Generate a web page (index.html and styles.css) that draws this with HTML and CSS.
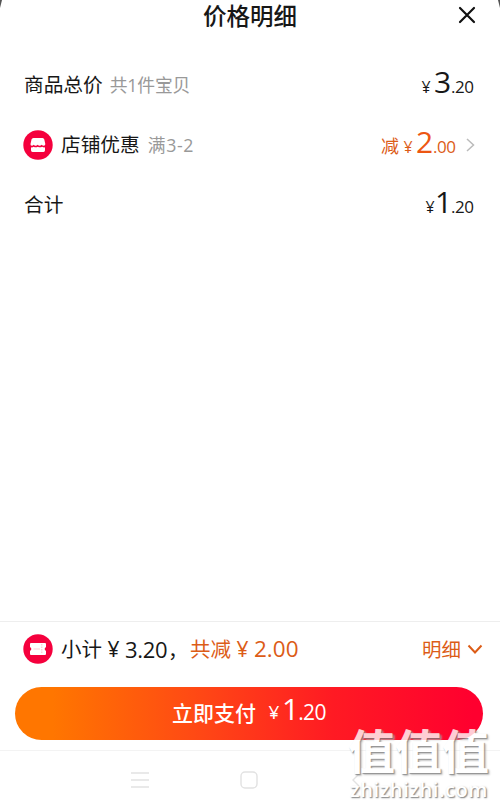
FILE: index.html
```html
<!DOCTYPE html>
<html lang="zh-CN">
<head>
<meta charset="utf-8">
<title>价格明细</title>
<link rel="stylesheet" href="styles.css">
</head>
<body>
<main class="sheet">
  <header class="header">
    <h1 class="title">价格明细</h1>
    <svg class="close" viewBox="0 0 18 18"><path d="M2 2 16 16M16 2 2 16"/></svg>
  </header>
  <section class="rows">
    <div class="row">
      <span class="label">商品总价</span><span class="note">共1件宝贝</span>
      <span class="price"><span class="yen">¥</span><span class="whole">3</span><span class="cents">.20</span></span>
    </div>
    <div class="row">
      <svg class="badge" viewBox="0 0 30 30"><circle cx="15" cy="15" r="14.7" fill="#f5003d"/><path fill="#fff" d="M10.500 8h9q1.500 0 1.800 1.500l1 4.500q.2 1.800-1.600 1.800-1.200 0-2-1-1 1-2.100 1t-1.900-1q-1 1-2.100 1t-1.900-1q-.8 1-1.800 1-1.700 0-1.400-1.800l1-4.500Q8.800 8 10.500 8ZM8 17.300q1.500.3 2.700-.6 1.900 1.100 4.200 0 2.100 1.100 4.200 0 1.300.9 2.900.6v3q0 1.600-1.500 1.600h-11Q8 21.900 8 20.300Z"/></svg>
      <span class="label">店铺优惠</span><span class="note note-wide">满3-2</span>
      <span class="price discount"><span class="minus">减</span><span class="yen">¥</span><span class="whole">2</span><span class="cents">.00</span></span>
      <svg class="arrow" viewBox="0 0 9 14"><path d="m1 1 6.500 6L1 13"/></svg>
    </div>
    <div class="row">
      <span class="label">合计</span>
      <span class="price"><span class="yen">¥</span><span class="whole narrow">1</span><span class="cents">.20</span></span>
    </div>
  </section>
  <footer class="footer">
    <div class="summary">
      <svg class="badge" viewBox="0 0 30 30"><circle cx="15" cy="15" r="14.7" fill="#f5003d"/><path fill="#fff" d="M8 9h14q1 0 1 1v3.200q-1.300.3-1.300 1.800t1.300 1.800v3.200q0 1-1 1H8q-1 0-1-1v-3.200q1.300-.3 1.300-1.800T7 13.200V10q0-1 1-1Z"/><path d="M18.800 10v10" stroke="#ff8ba1" stroke-width=".6" stroke-dasharray="1.500 1"/><path d="M10.500 15h6.500" stroke="#ffb5c0" stroke-width=".7"/></svg>
      <span class="subtotal">小计</span><span class="sum-yen">¥</span><span class="sum-number">3.20</span><span class="comma">，</span>
      <span class="saved"><span class="saved-label">共减</span><span class="sum-yen">¥</span><span class="sum-number saved-number">2.00</span></span>
      <span class="detail">明细</span>
      <svg class="chevron" viewBox="0 0 16 11"><path d="m1.500 1.500 6.500 7 6.500-7"/></svg>
    </div>
    <button class="pay"><span class="pay-label">立即支付</span><span class="yen">¥</span><span class="whole narrow">1</span><span class="cents">.20</span></button>
  </footer>
  <nav class="nav">
    <svg class="menu" viewBox="0 0 18 16"><path d="M0 1h18M0 8h18M0 15h18"/></svg>
    <svg class="home" viewBox="0 0 18 18"><rect x="1" y="1" width="16" height="16" rx="4"/></svg>
    <svg class="back" viewBox="0 0 10 16"><path d="M8 2 2 8l6 6"/></svg>
  </nav>
  <aside class="watermark"><div class="mark-name">值值值</div><div class="mark-site">zhizhizhi.com</div></aside>
  <i class="corner corner-left"></i><i class="corner corner-right"></i>
</main>
</body>
</html>
```
FILE: styles.css
```css
* { box-sizing: border-box; }
body { margin: 0; background: #fff; color: #171717; font-family: "Open Sans", "Noto Sans CJK SC", sans-serif; }
svg { display: block; flex: none; fill: none; }
.sheet { position: relative; display: flex; flex-direction: column; width: 500px; height: 808px; overflow: hidden; background: #fff; }
.corner { position: absolute; top: 0; width: 2px; height: 8px; background: #555; }
.corner-left { left: 0; clip-path: polygon(0 0, 100% 0, 0 100%); }
.corner-right { right: 0; clip-path: polygon(0 0, 100% 0, 100% 100%); }
.header { display: flex; align-items: center; justify-content: flex-end; height: 30px; padding-right: 24px; }
.title { flex: 1; margin: 0 0 0 42px; text-align: center; font-family: "Noto Sans CJK SC", sans-serif; font-size: 23.500px; line-height: 30px; font-weight: 500; }
.close { width: 18px; height: 18px; stroke: #111; stroke-width: 2.200; stroke-linecap: round; }
.rows { flex: 1; padding: 25px 25px 0 24px; }
.row { display: flex; align-items: center; height: 60px; white-space: nowrap; }
.label { font-size: 19.700px; line-height: 30px; }
.note { margin-left: 7px; color: #999; font-size: 17.800px; line-height: 30px; letter-spacing: -.2px; }
.note-wide { margin-left: 8px; letter-spacing: .6px; }
.badge { width: 30px; height: 30px; margin: 0 8px 0 -1px; }
.price { display: flex; align-items: baseline; margin-left: auto; padding-bottom: 2px; line-height: 30px; }
.yen { width: 10px; font-size: 16px; text-align: center; }
.whole { width: 17px; margin-left: 3px; font-size: 30px; line-height: 30px; }
.narrow { width: 14px; margin-left: 2px; text-indent: -2px; }
.cents { width: 24px; font-size: 17px; letter-spacing: -.5px; }
.discount, .saved, .detail { color: #dc5c17; }
.discount .whole { color: #ed5612; }
.minus { margin-right: 4px; font-size: 18px; }
.arrow { width: 9px; height: 14px; margin: 0 0 0 9px; stroke: #bbb; stroke-width: 1.500; }
.footer { height: 130px; padding: 0 17px 0 15px; border-top: 1px solid #eee; border-bottom: 1px solid #f3f3f3; }
.summary { display: flex; align-items: center; height: 54px; margin-bottom: 11px; padding-left: 9px; white-space: nowrap; }
.subtotal, .saved-label { font-size: 20.500px; line-height: 30px; }
.sum-yen { width: 13px; margin: 0 5px; font-size: 21px; line-height: 30px; text-align: center; }
.sum-number { width: 43px; font-size: 22px; line-height: 30px; letter-spacing: -.35px; }
.comma { width: 22px; font-size: 20px; }
.saved { display: flex; align-items: center; }
.saved-number { width: 46px; font-size: 22.500px; letter-spacing: 0; }
.detail { margin-left: auto; padding-bottom: 2px; font-size: 19.500px; }
.chevron { width: 16px; height: 11px; margin-left: 6px; stroke: #dc5c17; stroke-width: 2; }
.pay { display: flex; align-items: center; justify-content: center; width: 468px; height: 53px; padding: 0 0 3px; border: 0; border-radius: 27px; color: #fff; background: linear-gradient(90deg, #ff7600 8%, #ff4a14 38%, #ff1a23 68%, #ff002f 98%); font: inherit; line-height: 30px; }
.pay-label { margin-right: 12px; font-family: "Noto Sans CJK SC", sans-serif; font-size: 21px; font-weight: 500; }
.pay .yen { width: 12px; font-size: 19px; }
.pay .whole { margin-left: 4px; padding-bottom: 6px; }
.pay .cents { width: 28px; font-size: 21px; letter-spacing: -.6px; }
.nav { position: relative; display: flex; align-items: center; height: 57px; padding-left: 131px; stroke: #e2e2e2; stroke-width: 1.400; }
.menu { width: 18px; height: 16px; }
.home { width: 18px; height: 18px; margin-left: 91px; }
.back { width: 10px; height: 16px; margin-left: 93px; }
.watermark { position: absolute; left: 348px; top: 725px; width: 150px; color: #fff; white-space: nowrap; opacity: .8; }
.mark-name { font: 700 47px/48px "Noto Sans CJK SC", sans-serif; text-shadow: 1px 1px 1px #777, 2px 2px 2px #bbb; }
.mark-site { margin: 5px 0 0 2px; font: 600 20px/24px "Open Sans", sans-serif; letter-spacing: .6px; text-shadow: 1px 1px 1px #777, 1px 1px 2px #aaa; }
```
